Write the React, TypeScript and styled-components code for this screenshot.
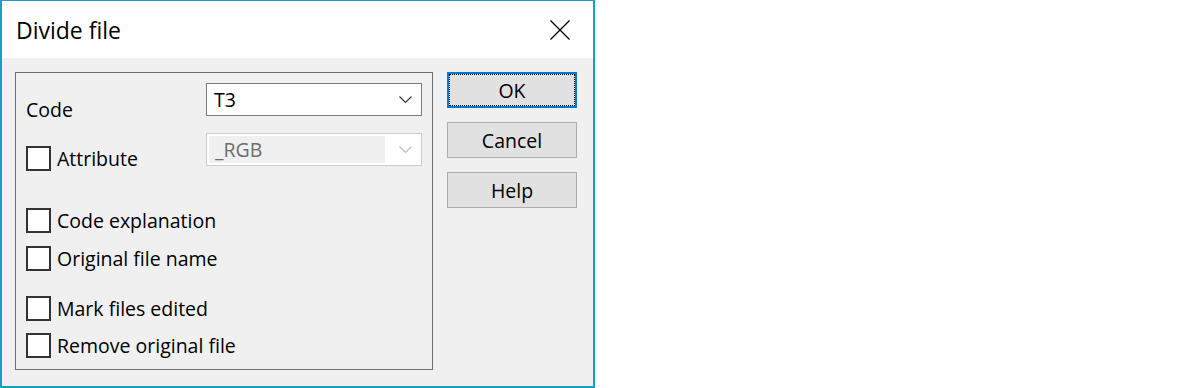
import React from "react";
import styled, { createGlobalStyle } from "styled-components";

const GlobalStyle = createGlobalStyle`
  html, body {
    margin: 0;
    padding: 0;
    background: #ffffff;
  }
  body {
    font-family: "Open Sans", "Noto Sans", sans-serif;
    color: #000000;
  }
`;

const Window = styled.div`
  box-sizing: border-box;
  width: 595px;
  height: 388px;
  border: 2px solid #1a9fc3;
  border-top-width: 1px;
  display: flex;
  flex-direction: column;
  background: #f0f0f0;
`;

const TitleBar = styled.div`
  height: 57px;
  flex: none;
  background: #ffffff;
  display: flex;
  align-items: center;
  padding: 0 23px 0 14px;
`;

const Title = styled.div`
  font-size: 23px;
  line-height: 1;
  flex: 1;
  padding-top: 1px;
`;

const CloseButton = styled.div`
  width: 20px;
  height: 20px;
  display: flex;
`;

const Body = styled.div`
  flex: 1;
  display: flex;
  gap: 14px;
  padding: 14px 16px 16px 13px;
  min-height: 0;
`;

const GroupBox = styled.div`
  flex: 1;
  border: 1px solid #6e6e6e;
  padding: 10px 10px 0 10px;
  display: flex;
  flex-direction: column;
`;

const FieldRow = styled.div<{ $top: number }>`
  display: flex;
  justify-content: space-between;
  align-items: flex-start;
  margin-top: ${(p) => p.$top}px;
`;

const FieldLabel = styled.div`
  font-size: 19.5px;
  line-height: 27px;
  margin-top: 13px;
`;

const Combo = styled.div<{ $disabled?: boolean }>`
  box-sizing: border-box;
  width: 216px;
  height: 33px;
  flex: none;
  background: #ffffff;
  border: 1px solid ${(p) => (p.$disabled ? "#cccccc" : "#7a7a7a")};
  display: flex;
  align-items: center;
  padding: ${(p) => (p.$disabled ? "2px 9px 2px 2px" : "0 9px 0 7px")};
`;

const ComboText = styled.div<{ $disabled?: boolean }>`
  flex: 1;
  align-self: stretch;
  display: flex;
  align-items: center;
  font-size: 19.5px;
  color: ${(p) => (p.$disabled ? "#6d6d6d" : "#000000")};
  background: ${(p) => (p.$disabled ? "#f0f0f0" : "transparent")};
  padding-left: ${(p) => (p.$disabled ? "6px" : "0")};
  margin-right: ${(p) => (p.$disabled ? "14px" : "0")};
`;

const CheckRow = styled.label<{ $top: number }>`
  display: flex;
  align-items: center;
  gap: 6px;
  margin-top: ${(p) => p.$top}px;
  font-size: 19.5px;
  line-height: 27px;
  height: 25px;
`;

const Box = styled.span`
  box-sizing: border-box;
  width: 25px;
  height: 25px;
  flex: none;
  background: #ffffff;
  border: 2px solid #333333;
`;

const ButtonColumn = styled.div`
  width: 130px;
  flex: none;
  display: flex;
  flex-direction: column;
  gap: 14px;
`;

const Button = styled.div<{ $default?: boolean }>`
  box-sizing: border-box;
  height: 36px;
  background: #e1e1e1;
  border: ${(p) => (p.$default ? "2px solid #0078d7" : "1px solid #adadad")};
  outline: ${(p) => (p.$default ? "1px dotted #000000" : "none")};
  outline-offset: -3px;
  display: flex;
  align-items: center;
  justify-content: center;
  font-size: 19.5px;
`;

const Chevron = ({ color }: { color: string }) => (
  <svg width="13" height="7" viewBox="0 0 13 7" style={{ flex: "none" }}>
    <polyline points="0.5,0.5 6.5,6.5 12.5,0.5" fill="none" stroke={color} strokeWidth="1.1" />
  </svg>
);

const Check = ({ label, top }: { label: string; top: number }) => (
  <CheckRow $top={top}>
    <Box />
    <span>{label}</span>
  </CheckRow>
);

export default function App() {
  return (
    <>
      <GlobalStyle />
      <Window>
        <TitleBar>
          <Title>Divide file</Title>
          <CloseButton>
            <svg width="20" height="20" viewBox="0 0 20 20">
              <line x1="0.5" y1="0.5" x2="19.5" y2="19.5" stroke="#000" strokeWidth="1.3" />
              <line x1="19.5" y1="0.5" x2="0.5" y2="19.5" stroke="#000" strokeWidth="1.3" />
            </svg>
          </CloseButton>
        </TitleBar>
        <Body>
          <GroupBox>
            <FieldRow $top={0}>
              <FieldLabel>Code</FieldLabel>
              <Combo>
                <ComboText>T3</ComboText>
                <Chevron color="#333333" />
              </Combo>
            </FieldRow>
            <FieldRow $top={10}>
              <Check label="Attribute" top={13} />
              <Combo $disabled>
                <ComboText $disabled>_RGB</ComboText>
                <Chevron color="#bfbfbf" />
              </Combo>
            </FieldRow>
            <Check label="Code explanation" top={37} />
            <Check label="Original file name" top={13} />
            <Check label="Mark files edited" top={25} />
            <Check label="Remove original file" top={12} />
          </GroupBox>
          <ButtonColumn>
            <Button $default>OK</Button>
            <Button>Cancel</Button>
            <Button>Help</Button>
          </ButtonColumn>
        </Body>
      </Window>
    </>
  );
}
